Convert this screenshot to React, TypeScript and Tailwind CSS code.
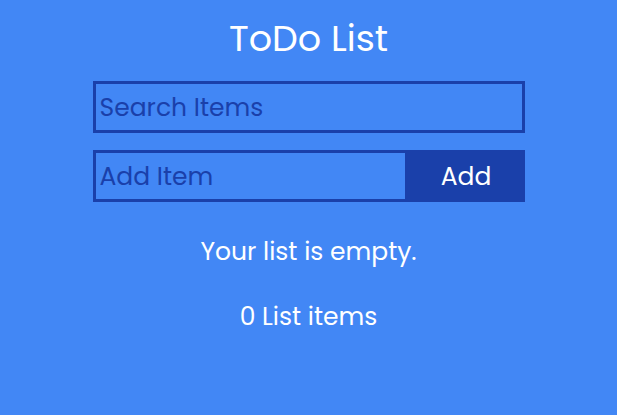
import React from "react";

export default function App() {
  const font = { fontFamily: "Poppins, Inter, 'Noto Sans', sans-serif" };
  return (
    <div className="min-h-[415px] w-full bg-[#4287f5] text-white" style={font}>
      <div className="mx-auto flex w-[432px] flex-col items-stretch pt-[15px]">
        <h1 className="text-center text-[36.5px] leading-[48px] font-normal">ToDo List</h1>
        <input
          className="mt-[18px] h-[52px] w-full border-[3px] border-[#1a40aa] bg-transparent px-[4px] pt-[2px] text-[25px] text-[#1a40aa] placeholder:text-[#1a40aa] outline-none"
          placeholder="Search Items"
        />
        <div className="mt-[17px] flex h-[52px]">
          <input
            className="h-[52px] w-[315px] min-w-0 shrink-0 border-[3px] border-[#1a40aa] bg-transparent px-[4px] pt-[2px] text-[25px] text-[#1a40aa] placeholder:text-[#1a40aa] outline-none"
            placeholder="Add Item"
          />
          <button className="h-[52px] w-[117px] shrink-0 bg-[#1a40aa] pt-[2px] text-[25px] text-white">Add</button>
        </div>
        <p className="mt-[32px] text-center text-[25px] leading-[36px]">Your list is empty.</p>
        <p className="mt-[29px] text-center text-[25px] leading-[36px]">0 List items</p>
      </div>
    </div>
  );
}
